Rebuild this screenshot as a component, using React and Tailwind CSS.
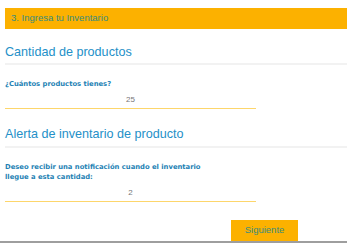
export default function App() {
  const sans = { fontFamily: '"Liberation Sans", Arial, sans-serif' };
  const label = { fontFamily: '"DejaVu Sans", Verdana, sans-serif' };
  return (
    <div className="w-[347px] h-[243px] bg-white overflow-hidden flex flex-col" style={sans}>
      <div className="flex flex-col pl-[5px] h-[241px]">
        <div className="mt-[8px] h-[21px] bg-[#fcb100] flex items-center pl-[6px] text-[9.5px] text-[#3a8c7e]">
          3. Ingresa tu Inventario
        </div>
        <h2 className="mt-[16px] text-[12.6px] leading-[15px] text-[#2490c8]">Cantidad de productos</h2>
        <div className="mt-[3px] h-[2px] bg-[#f2f2f2]" />
        <div className="mt-[14px] text-[6.8px] leading-[10px] font-bold text-[#1e82b4]" style={label}>
          ¿Cuántos productos tienes?
        </div>
        <div className="mt-[5px] w-[251px] h-[15px] border-b border-[#fdd66b] text-center text-[8px] leading-[12px] text-[#777777]">
          25
        </div>
        <h2 className="mt-[18px] text-[12.6px] leading-[15px] text-[#2490c8]">Alerta de inventario de producto</h2>
        <div className="mt-[4px] h-[2px] bg-[#f2f2f2]" />
        <div className="mt-[14px] text-[6.8px] leading-[10px] font-bold text-[#1e82b4]" style={label}>
          Deseo recibir una notificación cuando el inventario
          <br />
          llegue a esta cantidad:
        </div>
        <div className="mt-[5px] w-[251px] h-[15px] border-b border-[#fdd66b] text-center text-[8px] leading-[12px] text-[#777777]">
          2
        </div>
        <div className="mt-auto ml-[226px] w-[67px] h-[21px] bg-[#fcb100] flex items-center justify-center text-[9.5px] text-[#3a8c7e]">
          Siguiente
        </div>
      </div>
      <div className="h-[2px] bg-[#9e9e9e]" />
    </div>
  );
}
